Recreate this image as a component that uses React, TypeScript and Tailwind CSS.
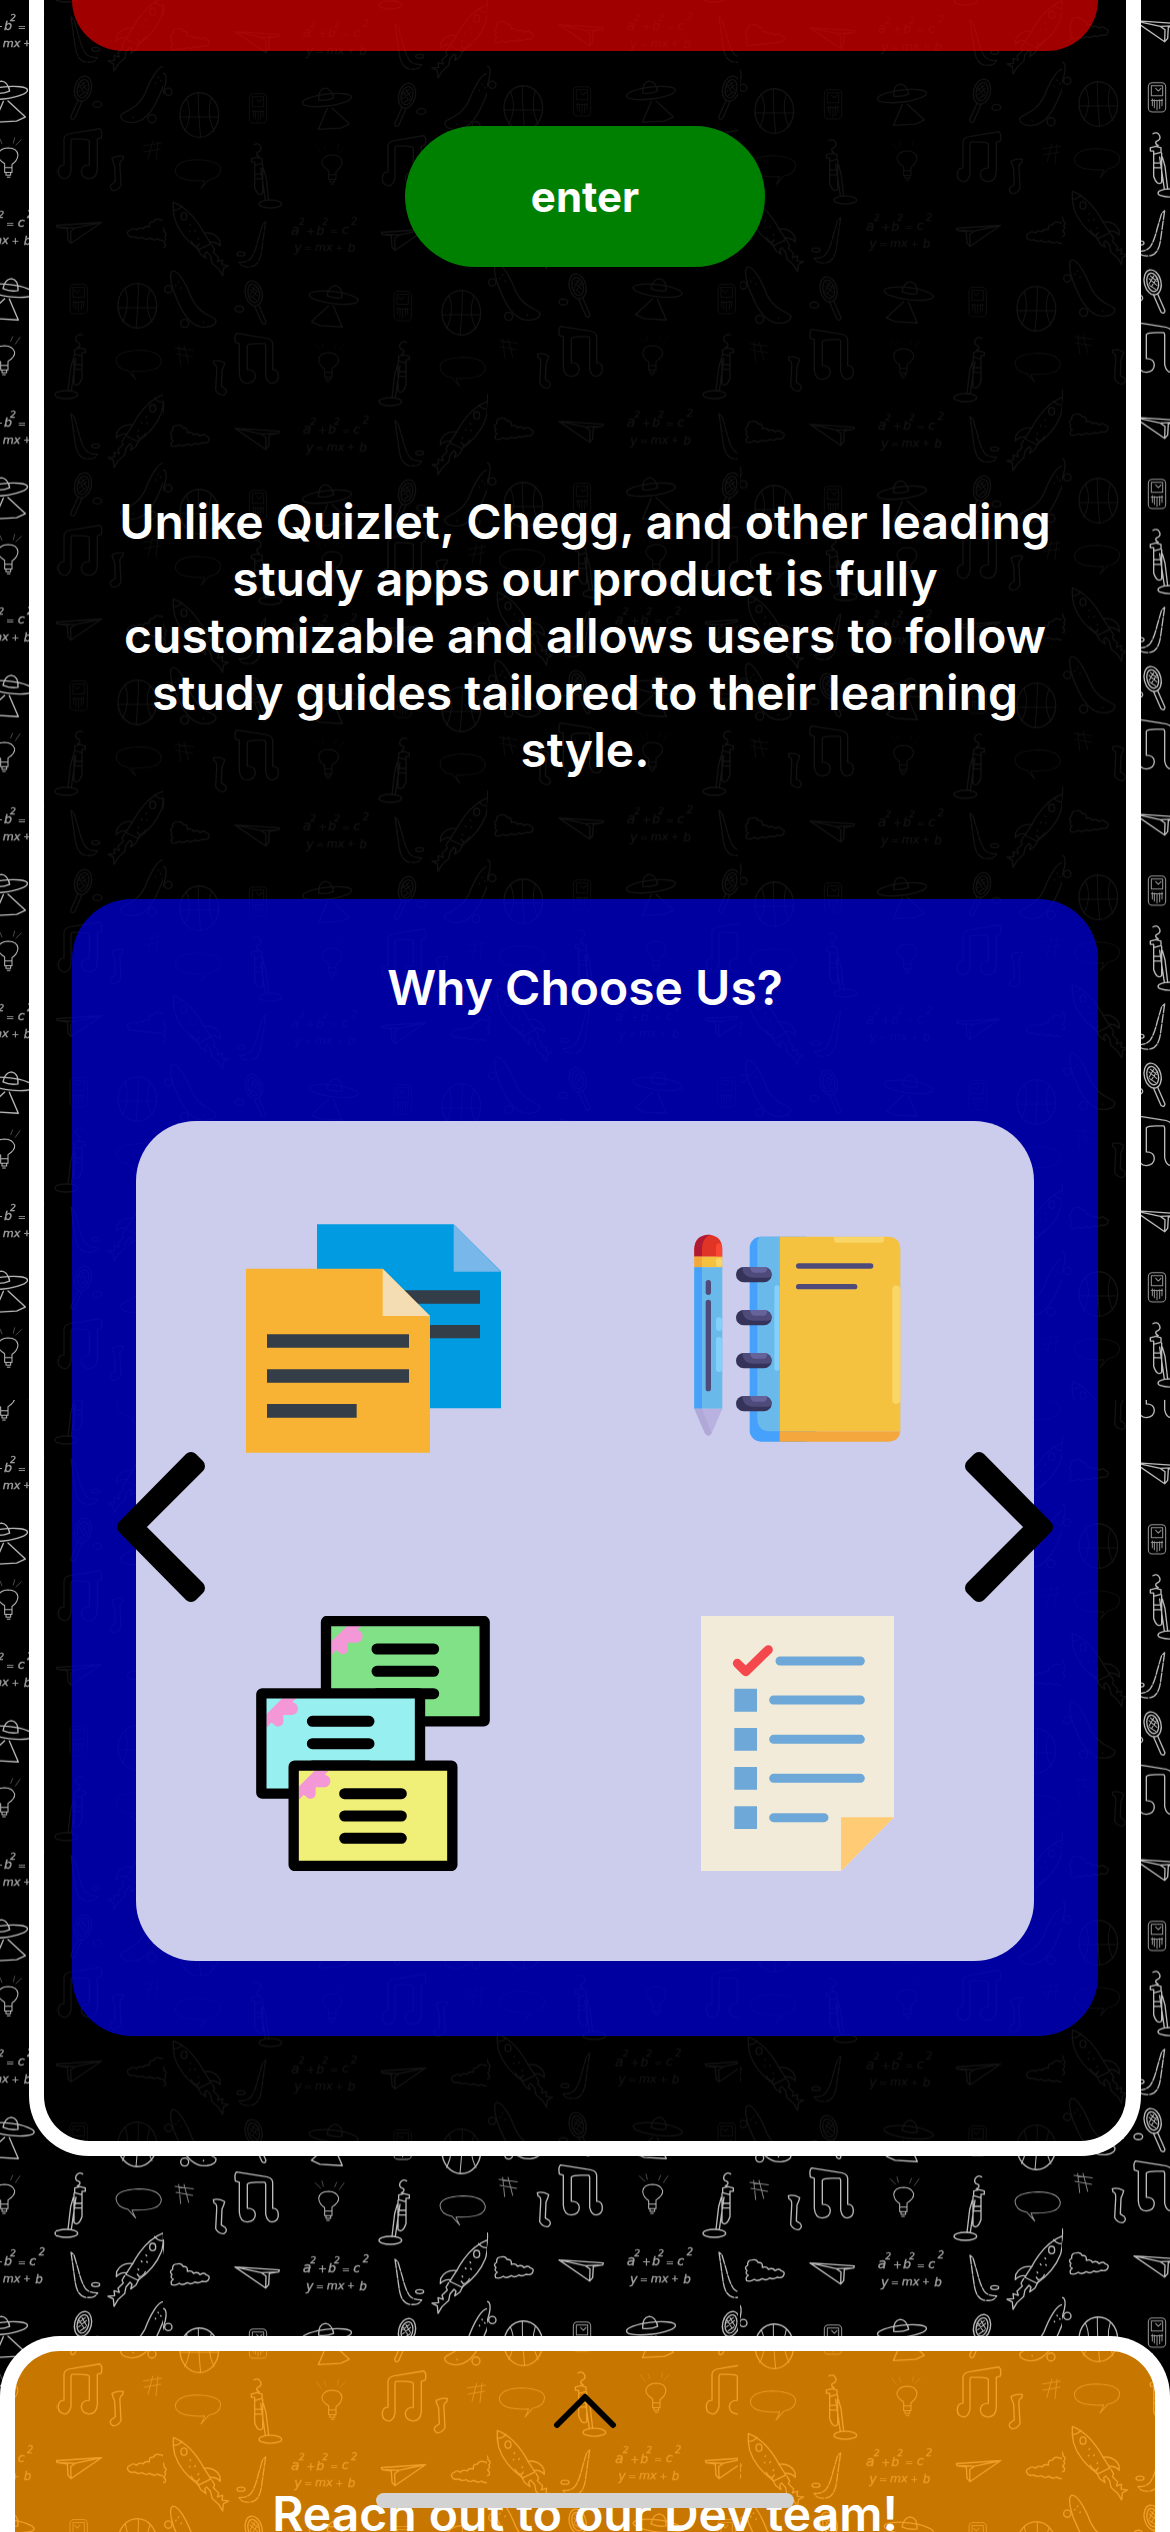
import React from "react";

const FONT = "font-['Inter','Liberation_Sans',sans-serif]";

/** Vertical strips of the chalk wallpaper: left edge, width, pattern offset. */
const STRIPS = [
  { x: 0, w: 163, ox: 58, dy: 0 },
  { x: 163, w: 324, ox: 58, dy: 7 },
  { x: 487, w: 251, ox: 382, dy: 0 },
  { x: 740, w: 322, ox: 633, dy: 3 },
  { x: 1062, w: 513, ox: 957, dy: -4 },
];

const BANDS = [
  { y: 0, h: 1400, oy: 17 },
  { y: 1400, h: 2000, oy: 269 },
];

function Doodles() {
  return (
    <g id="doodles" fill="none" stroke="#bcbcbc" strokeWidth="4" strokeLinejoin="round" strokeLinecap="round">
      {/* hockey stick and puck */}
      <path d="M39 0L44 35L52 92Q58 130 82 135Q108 138 114 128L119 122Q92 122 82 108Q70 90 62 56L48 8Z" strokeDasharray="26 5" />
      <ellipse cx="113" cy="97" rx="12" ry="6" />
      {/* rocket */}
      <path d="M316 -58C275 -42 245 -5 224 34L203 66L240 84C270 62 300 30 312 -8Q318 -35 316 -58Z" />
      <path d="M290 -47Q298 -36 313 -35M224 34Q190 30 176 58L175 73Q190 58 206 62M262 58Q258 70 244 74L238 66" />
      <ellipse cx="284" cy="-16" rx="9" ry="11" />
      <path d="M200 70L192 84L196 92L180 108L184 120L168 115L170 130L150 132L166 140L168 162L180 142L200 124L204 104L216 90L222 96L218 110L234 98L244 78" />
      <path d="M264 8l2 3M250 26l2 3M266 28l2 2M240 50l2 3" />
      {/* cloud */}
      <path d="M341 76Q336 66 346 60Q335 54 342 46Q332 36 344 30Q342 14 358 14Q370 10 376 22Q390 20 388 36Q402 32 406 42Q420 36 426 46Q440 38 444 46Q458 50 452 60Q448 70 432 66Q420 74 410 68Q398 78 388 70Q372 80 364 72Q352 80 341 76Z" />
      {/* paper plane */}
      <path d="M531 23L664 32L662 38L634 42L632 76L623 86L531 23L610 40L624 50L623 86M610 40L662 38" />
      {/* racket and ball */}
      <ellipse cx="75" cy="215" rx="25" ry="38" transform="rotate(14 75 215)" />
      <ellipse cx="75" cy="215" rx="17" ry="28" transform="rotate(14 75 215)" />
      <path d="M64 205l14 22M72 196l14 24M86 204l-24 20M82 196l-20 16M66 236l18 -12" strokeWidth="3" />
      <path d="M60 250L38 300Q40 312 50 304L72 254" />
      <ellipse cx="118" cy="262" rx="13" ry="9" />
      {/* skateboard */}
      <path d="M188 295C201 280 236 280 261 230C276 190 300 146 318 148C332 155 320 205 302 240C280 292 250 320 215 316Q186 312 188 295Z" />
      <circle cx="282" cy="305" r="12" />
      <circle cx="331" cy="203" r="11" />
      <path d="M300 180l1 2M292 198l1 2M308 190l1 2M225 300l1 2" />
      {/* basketball */}
      <ellipse cx="424" cy="273" rx="58" ry="67" />
      <path d="M366 279L482 279M421 206Q420 260 428 340M385 224Q406 270 380 322M460 222Q444 270 468 322" strokeWidth="3" />
      {/* music player */}
      <rect x="574" y="209" width="52" height="88" rx="12" strokeWidth="3" opacity=".8" />
      <path d="M583 218h34v30h-34zM596 226l8 8l8 -8M583 262h34M586 258v20M592 260v24M600 264v26M608 260v26M615 258v20" strokeWidth="3" opacity=".8" />
      {/* saucer */}
      <ellipse cx="807" cy="228" rx="74" ry="18" transform="rotate(-7 807 228)" />
      <path d="M782 228Q780 195 802 192Q822 194 827 222Q805 232 782 228M808 253L781 316L848 312L874 300L822 252" />
      {/* beamed notes */}
      <path d="M18 440V365Q20 350 46 348L126 335Q134 342 130 362L118 366V456Q116 484 94 485Q70 482 70 462Q72 444 94 444V372Q90 366 66 366H42Q38 368 39 380V462Q34 485 20 485Q0 482 1 462Q2 444 18 444Z" />
      {/* single note */}
      <path d="M162 424Q180 414 196 418L194 428Q184 430 186 448L189 505Q180 522 164 520Q152 512 160 502L172 494L170 446Q164 434 162 424Z" />
      {/* hash */}
      <path d="M256 386L311 378M258 405L308 396M284 372L270 426M300 372L294 430" strokeWidth="3" opacity=".7" />
      {/* speech bubble */}
      <path d="M429 494Q436 482 440 470Q352 474 352 438Q358 408 420 407Q486 410 488 436Q486 462 452 468L429 494" strokeWidth="3" opacity=".8" />
      {/* test tube on a stand */}
      <path d="M588 362Q600 354 608 368Q612 380 600 384Q590 390 604 398L580 404V414H590V424L612 418V404L596 400M590 424V490Q600 520 614 508V420M592 450H612M592 464H612M616 432L624 460L632 528M608 432L622 528" />
      <ellipse cx="637" cy="540" rx="34" ry="12" />
      {/* light bulb */}
      <path d="M812 440Q790 426 792 412Q798 394 822 393Q850 394 852 414Q850 432 834 442V466H812ZM812 452H834M816 466V474H830V466M820 480h8" strokeWidth="3" />
      <path d="M790 388L776 368M804 380L798 366M846 384L862 368M838 378L842 362" strokeWidth="2" opacity=".6" />
    </g>
  );
}

function Formula() {
  return (
    <g
      id="formula"
      fill="#a2a2a2"
      stroke="#a2a2a2"
      strokeWidth="1"
      fontFamily="'DejaVu Sans', sans-serif"
      fontStyle="italic"
    >
      <text x="734" y="40" fontSize="42">a</text>
      <text x="757" y="12" fontSize="28">2</text>
      <text x="780" y="40" fontSize="32">+</text>
      <text x="810" y="40" fontSize="38">b</text>
      <text x="828" y="12" fontSize="28">2</text>
      <text x="852" y="38" fontSize="28">=</text>
      <text x="886" y="38" fontSize="38">c</text>
      <text x="914" y="10" fontSize="30">2</text>
      <text x="744" y="92" fontSize="38">y</text>
      <text x="774" y="90" fontSize="28">=</text>
      <text x="806" y="90" fontSize="34">mx</text>
      <text x="868" y="88" fontSize="26">+</text>
      <text x="904" y="92" fontSize="36">b</text>
    </g>
  );
}

function Wallpaper() {
  return (
    <svg className="absolute inset-0 h-full w-full" aria-hidden="true">
      <defs>
        <Doodles />
        <Formula />
        <g id="sheet">
          <use href="#doodles" />
          <use href="#formula" />
          <use href="#doodles" transform="translate(662 593) scale(-1 1)" />
          <use href="#formula" x="-35" y="591" />
        </g>
        <g id="tile">
          {[-1190, 0, 1190].map((ty) =>
            [-972, 0, 972].map((tx) => <use key={`${tx}/${ty}`} href="#sheet" x={tx} y={ty} />),
          )}
        </g>
        {BANDS.map((b, j) =>
          STRIPS.map((s, i) => (
            <pattern
              key={`${i}/${j}`}
              id={`chalk-${i}-${j}`}
              patternUnits="userSpaceOnUse"
              width="972"
              height="1190"
              patternTransform={`translate(${s.ox} ${b.oy + s.dy}) scale(.33333)`}
            >
              <use href="#tile" />
            </pattern>
          )),
        )}
      </defs>
      {BANDS.map((b, j) =>
        STRIPS.map((s, i) => (
          <rect key={`${i}/${j}`} x={s.x} y={b.y} width={s.w} height={b.h} fill={`url(#chalk-${i}-${j})`} />
        )),
      )}
    </svg>
  );
}

function DocumentsIcon() {
  return (
    <svg viewBox="0 0 765 765" className="size-[255px]" role="img" aria-label="Documents">
      <path d="M213 40H623L765 181V592H213Z" fill="#009be0" />
      <path d="M623 40L765 182H623Z" fill="#78b7e9" />
      <path d="M400 238H702V278H400ZM400 342H702V382H400Z" fill="#333e48" />
      <path d="M0 173H410L552 315V725H0Z" fill="#f8b334" />
      <path d="M410 173L552 315H410Z" fill="#f4dcb3" />
      <path d="M63 370H489V410H63ZM63 475H489V515H63ZM63 579H332V620H63Z" fill="#333e48" />
    </svg>
  );
}

function NotebookIcon() {
  return (
    <svg viewBox="0 0 765 765" className="size-[255px]" role="img" aria-label="Notebook and pencil">
      <g transform="translate(3 -37)">
        <path d="M70 150Q72 110 112 108Q152 110 154 150V174H70Z" fill="#e03426" />
        <path d="M70 174V150Q72 108 118 108Q93 118 93 150V174Z" fill="#b01a34" />
        <path d="M135 145Q135 134 144 134Q153 136 153 150V174H135Z" fill="#f94733" />
        <path d="M70 174H154V206H70Z" fill="#f5c240" />
        <path d="M70 174H93V206H70Z" fill="#f3a73c" />
        <rect x="135" y="178" width="18" height="26" rx="9" fill="#f9d666" />
        <path d="M70 206H154V630H70Z" fill="#69b9eb" />
        <path d="M70 206H93V630H70Z" fill="#45a1fb" />
        <path d="M70 630H154L122 704Q112 718 102 704Z" fill="#b9b1e0" />
        <path d="M70 630H93L122 704Q112 718 102 704Z" fill="#b0a8d6" />
        <rect x="104" y="244" width="16" height="45" rx="8" fill="#4e4b7a" />
        <rect x="104" y="303" width="16" height="275" rx="8" fill="#4e4b7a" />
        <rect x="135" y="356" width="18" height="41" rx="9" fill="#83d0fb" />
        <rect x="135" y="415" width="18" height="105" rx="9" fill="#83d0fb" />
        <rect x="236" y="114" width="200" height="615" rx="34" fill="#45a1fb" />
        <path d="M268 114H326V698H294Q260 696 259 660V130Q261 116 268 114Z" fill="#69b9eb" />
        <path d="M326 698H688Q684 728 654 729H326Z" fill="#f3a73c" />
        <path d="M326 114H654Q686 116 688 148V698H326Z" fill="#f5c240" />
        <rect x="310" y="260" width="16" height="256" rx="8" fill="#83d0fb" />
        <path d="M489 115H639V124Q638 132 630 132H498Q490 132 489 124Z" fill="#f9d666" />
        <path d="M688 268Q684 260 675 260Q664 262 664 272V604Q664 614 675 616Q684 616 688 608Z" fill="#f9d666" />
        <rect x="375" y="194" width="232" height="16" rx="8" fill="#4e4b7a" />
        <rect x="375" y="256" width="184" height="16" rx="8" fill="#4e4b7a" />
        {[205, 334, 463, 592].map((y) => (
          <g key={y}>
            <rect x="195" y={y} width="107" height="46" rx="23" fill="#35335a" />
            <path d={`M214 ${y}H279Q300 ${y + 2} 302 ${y + 23}Q300 ${y + 32} 290 ${y + 32}H246Q214 ${y + 30} 214 ${y}Z`} fill="#4e4b7a" />
            <path d={`M237 ${y}H288V${y + 8}Q286 ${y + 17} 277 ${y + 17}H250Q239 ${y + 16} 237 ${y}Z`} fill="#66629a" />
          </g>
        ))}
      </g>
    </svg>
  );
}

function Flashcard({ x, y, fill }: { x: number; y: number; fill: string }) {
  return (
    <g transform={`translate(${x} ${y})`}>
      <rect x="15" y="15" width="475" height="300" fill={fill} />
      <path d="M30 78L78 30H120L108 42A16 16 0 0 1 104 80H81V98A16 16 0 0 1 51 106L44 103L30 119Z" fill="#f397d6" />
      <rect x="15" y="15" width="476" height="301" rx="3" fill="none" stroke="#000" strokeWidth="31" strokeLinejoin="round" />
      <path d="M168 99H338M168 166H338M168 233H338" stroke="#000" strokeWidth="33" strokeLinecap="round" />
    </g>
  );
}

function FlashcardsIcon() {
  return (
    <svg viewBox="0 0 765 765" className="size-[255px]" role="img" aria-label="Flashcards">
      <Flashcard x={225} y={0} fill="#80e187" />
      <Flashcard x={31} y={217} fill="#97f0ef" />
      <Flashcard x={128} y={434} fill="#f0ef78" />
    </svg>
  );
}

function ChecklistIcon() {
  return (
    <svg viewBox="0 0 765 765" className="size-[255px]" role="img" aria-label="Checklist">
      <path d="M93 0H672V604L513 765H93Z" fill="#f2ebd9" />
      <path d="M513 604H672L513 765Z" fill="#ffcb75" />
      <path d="M202 142L227 167L295 101" fill="none" stroke="#f4484d" strokeWidth="27" strokeLinecap="round" strokeLinejoin="round" />
      <path d="M193 218H261V287H193ZM193 336H261V404H193ZM193 453H261V521H193ZM193 571H261V639H193Z" fill="#6ea8d8" />
      <path d="M330 135H571M311 252H571M311 370H571M311 487H571M311 605H462" stroke="#6ea8d8" strokeWidth="27" strokeLinecap="round" />
    </svg>
  );
}

function Arrow({ flip }: { flip?: boolean }) {
  return (
    <svg viewBox="0 0 88 150" className={flip ? "h-[150px] w-[88px] -scale-x-100" : "h-[150px] w-[88px]"} aria-hidden="true">
      <path d="M74 7L81 14L20 75L81 136L74 143L7 75Z" fill="#000" stroke="#000" strokeWidth="14" strokeLinejoin="round" />
    </svg>
  );
}

export default function App() {
  return (
    <div className={`relative flex h-screen flex-col overflow-hidden bg-black text-white ${FONT}`}>
      <Wallpaper />

      <main className="relative mx-[29px] shrink-0 rounded-b-[60px] border-x-[15px] border-b-[15px] border-white bg-black/90 px-7 pb-[105px]">
        <div className="h-[51px] rounded-b-[60px] bg-[#ff0000]/63" />

        <div className="mt-[75px] flex justify-center">
          <button type="button" className="h-[141px] w-[360px] rounded-full bg-[#008000] text-[42px] font-bold">
            enter
          </button>
        </div>

        <p className="mt-[226px] px-8 text-center text-[48px] leading-[57px] font-semibold">
          Unlike Quizlet, Chegg, and other leading study apps our product is fully customizable and allows users to
          follow study guides tailored to their learning style.
        </p>

        <section className="mt-[121px] rounded-[60px] bg-[#0000ff]/63 px-16 pt-[60px] pb-[75px]">
          <h2 className="text-center text-[48px] leading-[57px] font-semibold">Why Choose Us?</h2>
          <div className="relative mt-[105px]">
            <div className="grid grid-cols-[255px_255px] justify-center gap-x-[169px] gap-y-[150px] rounded-[60px] bg-[#ccccec] py-[90px]">
              <DocumentsIcon />
              <NotebookIcon />
              <FlashcardsIcon />
              <ChecklistIcon />
            </div>
            <button type="button" aria-label="Previous" className="absolute top-[331px] -left-[19px]">
              <Arrow />
            </button>
            <button type="button" aria-label="Next" className="absolute top-[331px] -right-[19px]">
              <Arrow flip />
            </button>
          </div>
        </section>
      </main>

      <footer className="relative mt-[180px] flex shrink-0 flex-col items-center rounded-t-[60px] border-x-[15px] border-t-[15px] border-white bg-[#ff9800]/78 pt-[42px] pb-24">
        <button type="button" aria-label="Expand">
          <svg viewBox="0 0 64 36" className="h-9 w-16" aria-hidden="true">
            <path d="M4 32L32 4L60 32" fill="none" stroke="#000" strokeWidth="6" strokeLinecap="round" strokeLinejoin="round" />
          </svg>
        </button>
        <h2 className="mt-[56px] text-[48px] leading-[57px] font-semibold">Reach out to our Dev team!</h2>
      </footer>

      <div className="absolute bottom-6 left-1/2 h-[15px] w-[418px] -translate-x-1/2 rounded-full bg-[#d2d2d2]" />
    </div>
  );
}
